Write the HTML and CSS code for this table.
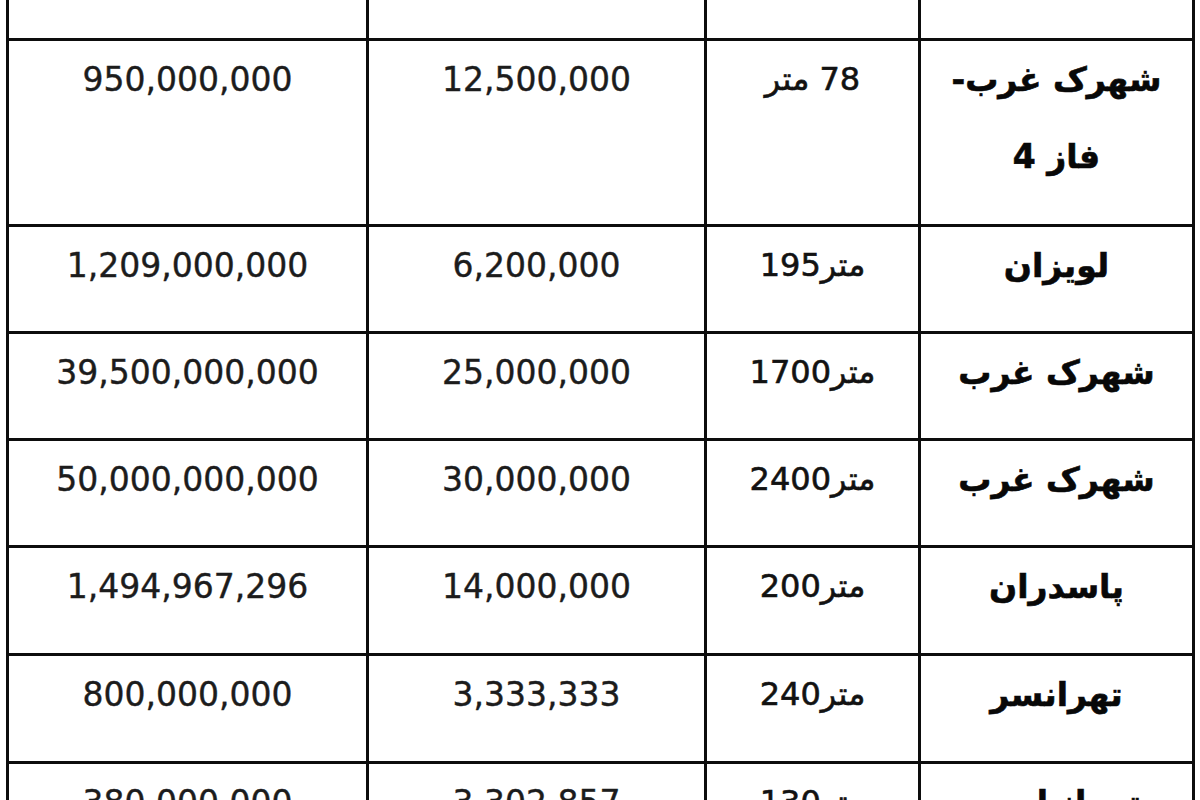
FILE: index.html
```html
<!DOCTYPE html>
<html lang="fa">
<head>
<meta charset="utf-8">
<title>جدول قیمت</title>
<link rel="stylesheet" href="styles.css">
</head>
<body>
<table class="price-table" dir="rtl">
  <colgroup>
    <col class="c-area">
    <col class="c-size">
    <col class="c-unit">
    <col class="c-total">
  </colgroup>
  <tr class="r-top">
    <td></td><td></td><td></td><td></td>
  </tr>
  <tr class="r-tall">
    <td class="name">شهرک غرب-<br>فاز 4</td>
    <td class="size">78 متر</td>
    <td class="num">12,500,000</td>
    <td class="num">950,000,000</td>
  </tr>
  <tr class="r-std">
    <td class="name">لویزان</td>
    <td class="size">متر195</td>
    <td class="num">6,200,000</td>
    <td class="num">1,209,000,000</td>
  </tr>
  <tr class="r-std">
    <td class="name">شهرک غرب</td>
    <td class="size">متر1700</td>
    <td class="num">25,000,000</td>
    <td class="num">39,500,000,000</td>
  </tr>
  <tr class="r-std">
    <td class="name">شهرک غرب</td>
    <td class="size">متر2400</td>
    <td class="num">30,000,000</td>
    <td class="num">50,000,000,000</td>
  </tr>
  <tr class="r-big">
    <td class="name">پاسدران</td>
    <td class="size">متر200</td>
    <td class="num">14,000,000</td>
    <td class="num">1,494,967,296</td>
  </tr>
  <tr class="r-big">
    <td class="name">تهرانسر</td>
    <td class="size">متر240</td>
    <td class="num">3,333,333</td>
    <td class="num">800,000,000</td>
  </tr>
  <tr class="r-std">
    <td class="name">تهرانپارس</td>
    <td class="size">متر130</td>
    <td class="num">3,302,857</td>
    <td class="num">380,000,000</td>
  </tr>
</table>
</body>
</html>
```
FILE: styles.css
```css
html, body {
  margin: 0;
  padding: 0;
  background: #ffffff;
  height: 800px;
  overflow: hidden;
}

.price-table {
  margin: 0 6px 0 6px;
  width: 1188px;
  border-collapse: collapse;
  table-layout: fixed;
  color: #161616;
}

.c-area { width: 274px; }
.c-size { width: 214px; }
.c-unit { width: 338px; }
.c-total { width: 360px; }

.price-table td {
  border: 3px solid #0d0d0d;
  vertical-align: top;
  text-align: center;
  padding: 0;
  line-height: 77px;
}

.r-top td {
  border-top: none;
  height: 38px;
}

.r-tall td { height: 183px; }
.r-std td { height: 104px; }
.r-big td { height: 105px; }

.name {
  font-family: "DejaVu Sans", sans-serif;
  font-weight: bold;
  font-size: 33px;
  color: #080808;
  -webkit-text-stroke: 0.6px #080808;
}

.size {
  font-family: "DejaVu Sans", sans-serif;
  font-size: 32px;
  color: #121212;
  -webkit-text-stroke: 0.6px #121212;
}

.num {
  font-family: "DejaVu Sans", sans-serif;
  font-size: 33px;
  color: #1c1c1c;
  -webkit-text-stroke: 0.4px #1c1c1c;
}
```
